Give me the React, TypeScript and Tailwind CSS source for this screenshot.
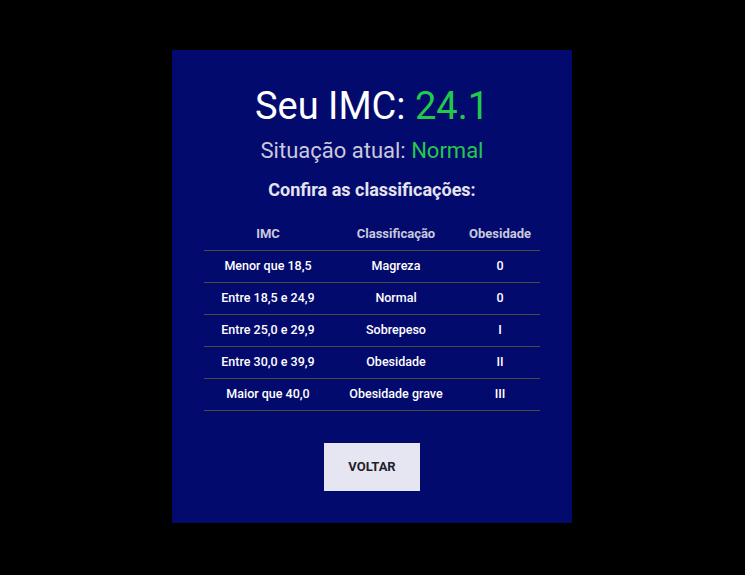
const rows = [
  { imc: "Menor que 18,5", cls: "Magreza", ob: "0" },
  { imc: "Entre 18,5 e 24,9", cls: "Normal", ob: "0" },
  { imc: "Entre 25,0 e 29,9", cls: "Sobrepeso", ob: "I" },
  { imc: "Entre 30,0 e 39,9", cls: "Obesidade", ob: "II" },
  { imc: "Maior que 40,0", cls: "Obesidade grave", ob: "III" },
]

export default function App() {
  return (
    <div className="min-h-screen bg-black flex justify-center pt-[50px] pr-px font-['Roboto',sans-serif]">
      <div className="w-[400px] h-[473px] bg-[#030a6e] flex flex-col items-center pt-[30px]">
        <h1 className="text-[38px] leading-[52px] text-white">
          Seu IMC: <span className="text-[#22c94b]">24.1</span>
        </h1>
        <p className="text-[22px] leading-[30px] text-[#c9c9dc] mt-[4px]">
          Situação atual: <span className="text-[#22c94b]">Normal</span>
        </p>
        <h2 className="text-[18px] leading-[26px] font-bold text-[#e4e4f0] mt-[11px]">
          Confira as classificações:
        </h2>
        <table className="w-[336px] mt-[15px] border-collapse">
          <thead>
            <tr className="border-b border-[#4d4b45] h-[32px]">
              <th className="w-[128px] text-[13px] font-bold text-[#c9c9dc] align-middle">IMC</th>
              <th className="w-[128px] text-[13px] font-bold text-[#c9c9dc] align-middle">Classificação</th>
              <th className="w-[80px] text-[13px] font-bold text-[#c9c9dc] align-middle">Obesidade</th>
            </tr>
          </thead>
          <tbody>
            {rows.map((r) => (
              <tr key={r.imc} className="border-b border-[#4d4b45] h-[32px]">
                <td className="text-center text-[12.5px] font-medium text-white">{r.imc}</td>
                <td className="text-center text-[12.5px] font-medium text-white">{r.cls}</td>
                <td className="text-center text-[12.5px] font-medium text-white">{r.ob}</td>
              </tr>
            ))}
          </tbody>
        </table>
        <button className="mt-[32px] w-[96px] h-[48px] bg-[#e6e6f2] text-[#1f1f2a] text-[13px] font-bold">
          VOLTAR
        </button>
      </div>
    </div>
  )
}
